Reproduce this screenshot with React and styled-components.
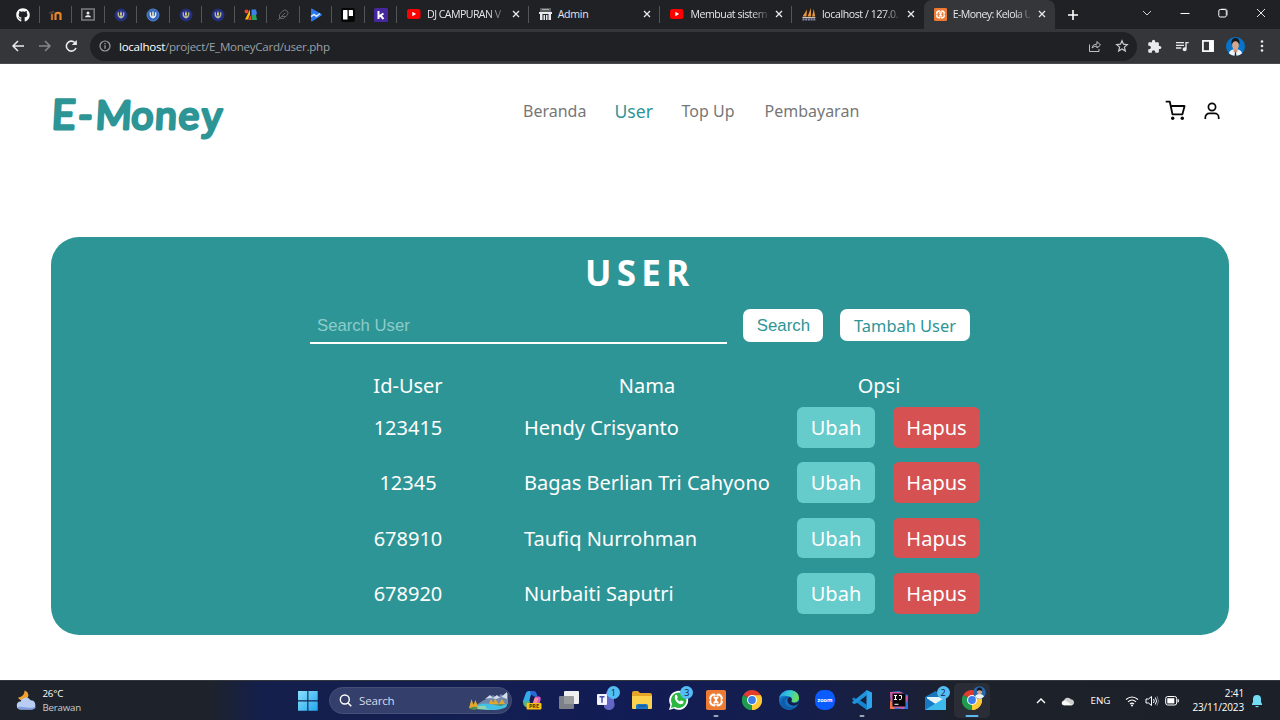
import React from "react";
import styled, { createGlobalStyle, css } from "styled-components";
import { FaGithub } from "react-icons/fa";
import { MdExtension, MdQueueMusic } from "react-icons/md";
import { Feather } from "lucide-react";

const teal = "#2e9596";
const uiFont = '"Open Sans", "Noto Sans", sans-serif';

const GlobalStyle = createGlobalStyle`
  * { box-sizing: border-box; }
  body { margin: 0; background: #fff; font-family: "Noto Sans", sans-serif; overflow: hidden; }
  svg { display: block; flex: none; }
  button, input { margin: 0; }
`;

const Screen = styled.div`
  width: 1280px;
  height: 720px;
  display: flex;
  flex-direction: column;
  overflow: hidden;
`;

/* ---------- browser ---------- */

const TabStrip = styled.div`
  height: 29px;
  flex: none;
  display: flex;
  padding-left: 7px;
  background: #202124;
  font: 10.6px ${uiFont};
  color: #e4e6e9;
`;

const separator = css`
  background-image: linear-gradient(#55565a, #55565a);
  background-size: 1px 17px;
  background-position: right 6px;
  background-repeat: no-repeat;
`;

const PinnedTab = styled.div`
  width: 32.5px;
  flex: none;
  display: flex;
  align-items: center;
  justify-content: center;
  ${separator}
`;

const Tab = styled.div`
  width: 131.7px;
  flex: none;
  display: flex;
  align-items: center;
  padding: 0 8px 1px 10px;
  ${(p) => (p.$active ? "background: #35363a; border-radius: 8px 8px 0 0;" : p.$last ? "" : separator)}
`;

const TabTitle = styled.span`
  width: 77px;
  margin-left: 6px;
  white-space: nowrap;
  letter-spacing: ${(p) => p.$spacing || "-0.15px"};
  ${(p) => p.$fade && "mask-image: linear-gradient(90deg, #000 80%, rgba(0, 0, 0, .2) 100%);"}
`;

const TabClose = styled.span`
  margin-left: auto;
`;

const NewTab = styled.div`
  width: 36px;
  display: flex;
  align-items: center;
  justify-content: center;
`;

const WindowButtons = styled.div`
  margin-left: auto;
  display: flex;
  align-items: center;
  height: 25px;
`;

const WindowButton = styled.div`
  width: 38px;
  display: flex;
  justify-content: center;
`;

const Toolbar = styled.div`
  height: 35px;
  flex: none;
  display: flex;
  align-items: center;
  background: #35363a;
  border-bottom: 1px solid #494a4e;
`;

const NavButtons = styled.div`
  display: flex;
  width: 90px;
  padding-left: 10px;
  gap: 10.5px;
`;

const AddressBar = styled.div`
  width: 1047px;
  height: 29px;
  border-radius: 15px;
  background: #202124;
  display: flex;
  align-items: center;
  padding: 0 8px 0 9px;
  font: 11.6px ${uiFont};
  letter-spacing: -0.28px;
  color: #9aa0a6;
`;

const Address = styled.span`
  margin-left: 8px;
  b { font-weight: 400; color: #fff; }
`;

const AddressActions = styled.span`
  margin-left: auto;
  display: flex;
  gap: 13px;
`;

const Extensions = styled.div`
  display: flex;
  align-items: center;
  padding-left: 10px;
  color: #e8eaed;
  gap: 12px;
  > svg:last-child { margin-left: 2px; }
`;

/* ---------- page ---------- */

const Page = styled.main`
  height: 616px;
  flex: none;
  background: #fff;
`;

const Header = styled.header`
  height: 94px;
  display: flex;
  align-items: center;
  padding: 0 56px 0 50px;
`;

const Logo = styled.div`
  width: 473px;
`;

const Menu = styled.nav`
  display: flex;
`;

const MenuLink = styled.a`
  width: ${(p) => p.$width}px;
  font-size: ${(p) => (p.$active ? 17.6 : 16)}px;
  line-height: 24px;
  color: ${(p) => (p.$active ? teal : "#777")};
  white-space: nowrap;
`;

const HeaderIcons = styled.div`
  margin-left: auto;
  display: flex;
  gap: 12px;
`;

const Card = styled.section`
  margin: 79px 51px 0 51.4px;
  height: 398px;
  border-radius: 28px;
  background: ${teal};
  color: #fff;
  display: flex;
  flex-direction: column;
  align-items: center;
`;

const CardTitle = styled.h1`
  margin: 12px 0 0;
  padding-right: 1px;
  font-size: 35px;
  line-height: 48px;
  letter-spacing: 5.3px;
`;

const SearchRow = styled.form`
  margin: 12px 0 0 -0.4px;
  width: 660px;
  height: 35px;
  display: flex;
  align-items: flex-start;
`;

const SearchInput = styled.input`
  width: 417px;
  height: 35px;
  margin-right: 16.4px;
  padding: 1px 7px 0;
  border: 0;
  border-bottom: 2px solid #fff;
  background: transparent;
  color: #fff;
  font: 16.7px "Liberation Sans", Arial, sans-serif;
  outline: none;
  &::placeholder { color: #8cccca; opacity: 1; }
`;

const WhiteButton = styled.button`
  width: ${(p) => p.$width}px;
  height: ${(p) => p.$height}px;
  padding: ${(p) => p.$padTop || 0}px 0 0;
  border: 0;
  border-radius: 7px;
  background: #fff;
  color: ${teal};
  font: ${(p) => p.$font};
  margin-right: 16.6px;
  white-space: nowrap;
  &:last-child { margin-right: 0; }
`;

const Table = styled.div`
  width: 680px;
  margin: 27.4px 0 0 -0.4px;
  font-size: 20px;
`;

const Row = styled.div`
  display: grid;
  grid-template-columns: 216px 262px 202px;
  height: ${(p) => (p.$head ? 29 : 55.3)}px;
  line-height: ${(p) => (p.$head ? 29 : 41)}px;
`;

const Cell = styled.div`
  white-space: nowrap;
  text-align: ${(p) => (p.$left ? "left" : "center")};
  padding-left: ${(p) => (p.$left ? 8 : 0)}px;
`;

const Actions = styled.div`
  display: flex;
  padding-left: 19px;
  gap: 18px;
`;

const ActionButton = styled.button`
  width: ${(p) => (p.$danger ? 87 : 78)}px;
  height: 40.6px;
  padding: 0;
  border: 0;
  border-radius: 6px;
  background: ${(p) => (p.$danger ? "#d65252" : "#66cbcb")};
  color: #fff;
  font: 20px "Noto Sans", sans-serif;
`;

const TableBody = styled.div`
  padding-top: 6.8px;
`;

/* ---------- taskbar ---------- */

const Taskbar = styled.footer`
  height: 40px;
  flex: none;
  display: flex;
  align-items: center;
  border-top: 1px solid #34373d;
  background: linear-gradient(90deg, #1e232b 0, #1e232b 210px, #141f4b 260px, #141f50 420px, #121c55 620px, #141e4d 790px, #1b2036 925px, #1d2129 960px, #1c2129 100%);
  font-family: ${uiFont};
  color: #fff;
`;

const Weather = styled.div`
  width: 298px;
  padding-left: 16px;
  display: flex;
  align-items: center;
  gap: 5.5px;
  font-size: 9.7px;
  line-height: 13.5px;
  letter-spacing: -0.2px;
  svg { margin-bottom: 2px; }
  span { display: block; color: #c8cbd0; }
`;

const TaskSearch = styled.div`
  width: 183px;
  height: 27px;
  margin: 0 2px 0 11px;
  padding: 0 2px 0 9px;
  display: flex;
  align-items: center;
  gap: 7px;
  border: 1px solid #454f78;
  border-radius: 14px;
  background: #353f6b;
  color: #d6daea;
  font-size: 11.6px;
  letter-spacing: -0.2px;
  svg:last-child { margin-left: auto; }
`;

const Apps = styled.div`
  display: flex;
  height: 39px;
  align-items: center;
`;

const AppSlot = styled.div`
  position: relative;
  width: 36.65px;
  height: 35px;
  border-radius: 5px;
  display: flex;
  align-items: center;
  justify-content: center;
  padding-bottom: 1px;
  ${(p) => p.$active && "background: #2a2d35;"}
  &::after {
    content: "";
    display: ${(p) => (p.$running ? "block" : "none")};
    position: absolute;
    bottom: ${(p) => (p.$active ? 1 : 1.5)}px;
    left: 50%;
    width: ${(p) => (p.$active ? 13 : 5)}px;
    height: 2px;
    transform: translateX(-50%);
    border-radius: 1px;
    background: ${(p) => (p.$active ? "#5ab9f0" : "#9fa3b6")};
  }
`;

const Badge = styled.span`
  position: absolute;
  top: 3px;
  right: 4px;
  width: 13px;
  height: 13px;
  border-radius: 50%;
  background: #54bdf3;
  color: #12233d;
  font-size: 9px;
  line-height: 13px;
  text-align: center;
`;

const Tray = styled.div`
  margin-left: auto;
  display: flex;
  align-items: center;
  padding-right: 17px;
`;

const Language = styled.span`
  width: 20px;
  margin: 0 14.5px 0 16px;
  font-size: 9.8px;
`;

const StatusIcons = styled.span`
  display: flex;
  gap: 6px;
`;

const Clock = styled.div`
  width: 65px;
  margin-right: 7px;
  text-align: right;
  font-size: 10px;
  line-height: 13.5px;
  letter-spacing: -0.15px;
`;

/* ---------- drawings ---------- */

const Svg = ({ w = 20, h = w, vb = `0 0 ${w} ${h}`, children, ...rest }) => (
  <svg width={w} height={h} viewBox={vb} fill="none" {...rest}>{children}</svg>
);

const Wordmark = () => (
  <Svg w={180} h={60} fontSize="39" fontFamily="Lato, sans-serif">
    <text
      x="3.500 30 47.500 83.200 107 130.600 154" y="48.500" transform="skewX(-3)"
      fill={teal} stroke={teal} strokeWidth="3" strokeLinejoin="round"
    ><tspan fontSize="41">E</tspan>-Mone<tspan fontFamily="Liberation Sans, sans-serif" fontSize="39" dy="1">y</tspan></text>
  </Svg>
);

const Xampp = ({ size }) => (
  <Svg w={size} vb="0 0 20 20">
    <rect width="20" height="20" rx="1.800" fill="#ed7a33" />
    <rect x="4.200" y="4.700" width="11.600" height="10.600" rx="4" stroke="#fff" strokeWidth="2.200" />
    <path d="M7.500 7.300q2.500 0 2.500 2.700t2.500 2.700M12.500 7.300q-2.500 0-2.500 2.700t-2.500 2.700" stroke="#fff" strokeWidth="2.100" />
    <path d="M8.500 3h3l-1.500 2.500zM8.500 17h3L10 14.500zM2.500 8.500v3L4.600 10zM17.500 8.500v3L15.400 10z" fill="#ed7a33" />
  </Svg>
);

const YouTube = () => (
  <Svg w={14} h={14}><rect y="2" width="13.5" height="10" rx="2.5" fill="#f00" /><path d="M5.3 4.8v4.4L9.2 7z" fill="#fff" /></Svg>
);

const Close = () => (
  <Svg w={10}><path d="M2 2l6 6M8 2L2 8" stroke="#e8eaed" strokeWidth="1.3" /></Svg>
);

const Moodle = () => (
  <Svg w={15} h={12}><path d="M4 5v6" stroke="#c47429" strokeWidth="2.200" /><path d="M7.500 11V5.500c0-2.300 5-2.300 5 0V11" stroke="#e9862b" strokeWidth="2.200" /><path d="M0 4l5-2.500L7 3 4 5z" fill="#4a4038" /></Svg>
);

const Classroom = () => (
  <Svg w={14} h={13}><rect x=".8" y="1" width="12.4" height="11" fill="#252629" stroke="#76787b" strokeWidth="1.6" /><circle cx="7" cy="5" r="1.5" fill="#e8e8e8" /><path d="M4 9.2c.4-2.6 5.6-2.6 6 0z" fill="#e8e8e8" /></Svg>
);

const Crest = ({ light }) => (
  <Svg w={14}><circle cx="7" cy="7" r="6" fill={light ? "#3765b9" : "#25308b"} stroke={light ? "#4f86d9" : "#26306e"} /><path d="M4.300 4.300c-.4 4 .8 5 2.700 5.300 1.900-.3 3.100-1.300 2.700-5.300M7 3.500v7" stroke={light ? "#e5edf7" : "#b9bd90"} strokeWidth="1.300" /><circle cx="7" cy="6" r="1" fill="#f0d95a" /></Svg>
);

const ColourMark = () => (
  <Svg w={14}><circle cx="2.500" cy="3.500" r="2" fill="#e94435" /><path d="M1 11.500l5-10v5l-2 5z" fill="#f9bb05" /><path d="M7.500 1.500H12l1 4.500-1.500 1h-4z" fill="#3c80ee" /><path d="M7.500 7H12l1 5H7.500z" fill="#27a559" /><path d="M4 12l3-5v5z" fill="#e94435" /></Svg>
);

const PlayWave = () => (
  <Svg w={14} h={14}><path d="M2 1.2q0-1 1.2-.5l9.2 5.2q1.2.8 0 1.7l-9 5.6Q2 13.800 2 12.400z" fill="#2a78f0" /><path d="M2 8.700l3-2.300 2.500 1.900L11 5.500" stroke="#d8eaff" strokeWidth="1.500" /></Svg>
);

const Trello = () => (
  <Svg w={14}><rect width="14" height="14" rx="2" fill="#060606" /><rect x="2" y="2" width="4.500" height="9.500" rx=".6" fill="#fff" /><rect x="7.800" y="2" width="4.200" height="6" rx=".6" fill="#fff" /></Svg>
);

const KMark = () => (
  <Svg w={14}><rect width="14" height="14" rx="1.500" fill="#46279d" /><path d="M4.500 3v8M9.500 5.500L5 8.300M6.500 7.500l3 3.500" stroke="#fff" strokeWidth="2" /></Svg>
);

const AdminMark = () => (
  <Svg w={13} h={14}><path d="M1 1h11v4H1z" fill="#5a5d60" /><path d="M3 2.500h7" stroke="#aaa" /><path d="M0 5h13v2H0zM1 7h2.500v6H1zM4.500 8h1.500v5H4.500zM7 8h1.500v5H7zM9.500 7H12v6H9.500z" fill="#e6e8e9" /></Svg>
);

const PhpMyAdmin = () => (
  <Svg w={14} h={14}><path d="M.5 9.500L5 2.500 4.500 9.500zM5.500 9.500L9 1v8.500zM10 9.500l1.800-7.500 1.400 7.500z" fill="#e8963b" /><path d="M0 10h14l-1.500 1.200H1z" fill="#c9c3b8" /><path d="M.5 12.500h13" stroke="#8588a8" strokeWidth="2" strokeDasharray="2 .7" /></Svg>
);

const Face = ({ size = 19 }) => (
  <Svg w={size} vb="0 0 20 20"><circle cx="10" cy="10" r="10" fill="#0873ca" /><path d="M3 17q1.500-3.500 5-4l2 1 2-1q3.500.5 5 4-3 3-7 3t-7-3z" fill="#eef3f7" /><path d="M8 11h4v4l-2 2-2-2z" fill="#c78f76" /><ellipse cx="10" cy="8.500" rx="3.500" ry="4.800" fill="#d6a58b" /><path d="M6 8C5 3.500 7 1 10 1s5 2.500 4 7c-.8-1.500-1.500-3.500-4-3.500S6.800 6.500 6 8z" fill="#17191e" /><path d="M9.500 16h1l.5 4h-2z" fill="#20242b" /></Svg>
);

const Chrome = ({ face }) => (
  <Svg w={20} overflow="visible">
    <path d="M10 10L1.340 5A10 10 0 0 1 18.660 5z" fill="#e33b2e" />
    <path d="M10 10l8.660-5A10 10 0 0 1 10 20z" fill="#fcc934" />
    <path d="M10 10v10A10 10 0 0 1 1.340 5z" fill="#1e9b4c" />
    <path d="M10 5.300h8.800A10 10 0 0 1 10 20l4.500-7.500z" fill="#fcc934" />
    <path d="M1.340 5L6 12.500 10 14.500 8 20A10 10 0 0 1 1.340 5z" fill="#1e9b4c" />
    <circle cx="10" cy="10" r="5" fill="#fff" /><circle cx="10" cy="10" r="3.900" fill="#3e7de8" />
    {face && <g transform="translate(11.500 -3.500)"><circle cx="6" cy="6" r="6.300" fill="#2568ae" /><path d="M1.500 10q1-2.500 4.500-2.500t4.500 2.500q-4.500 4.500-9 0z" fill="#f1f3f5" /><circle cx="6" cy="5" r="2.600" fill="#d6a58b" /><path d="M3.200 5q0-4 2.800-4t2.800 4Q6 2.500 3.200 5z" fill="#15171c" /></g>}
  </Svg>
);

const WeatherIcon = () => (
  <Svg w={21} h={22}><path d="M8.500 1.500c0 4-2 6.500-6.500 7 1.500 3 5.500 4 8.500 1.500s2.500-7-2-8.500z" fill="#efa22e" /><path d="M5 20.500a4 4 0 0 1-.4-8 5.500 5.500 0 0 1 10-1.200A4.700 4.700 0 0 1 16 20.500z" fill="#b9cdf4" /><path d="M1.500 18q1 2.500 3.500 2.500h11q3 0 4-3-4 2-9 1t-9.500-.5z" fill="#809fe0" /></Svg>
);

const Windows = () => (
  <Svg w={20}><defs><linearGradient id="win" x1="0" y1="0" x2="1" y2="1"><stop stopColor="#8be0fd" /><stop offset="1" stopColor="#22a5ee" /></linearGradient></defs><path d="M0 0h9.300v9.300H0zM10.400 0h9.300v9.300h-9.300zM0 10.400h9.300v9.300H0zM10.400 10.400h9.300v9.300h-9.300z" fill="url(#win)" /></Svg>
);

const Landscape = () => (
  <Svg w={41} h={20}><path d="M8 14l8-5 5-2 4-3 4 3 4-4 3 2 4-3v11l-10 3z" fill="#6f86ad" /><path d="M17 8l5-4 3 3 4-3 3 3 7-6v7l-5-2-6 2-5-1z" fill="#d5deed" /><path d="M4 17q8-6 18-4t17 0q1 4-8 5.500t-27-1.500z" fill="#42bfe2" /><path d="M5 18q5-4 13-3-2 2 4 3.500z" fill="#8fd5b0" /><path d="M1 17L3.500 8l3 9zM4 17L7.500 9l3 8zM21 13l2-5 3 5zM25 13.500l2-6 4 6zM31 13l3-5 3 5z" fill="#e1a72e" /><path d="M1 18q5-4 9-1l-3 2zM25 13.500h12l-4 1.500z" fill="#4d8f51" /></Svg>
);

const Copilot = () => (
  <Svg w={20}><path d="M1 11L3.500 4Q4.500 1 7 1h5q-2.500 1-3.500 5L7 12H3q-3 0-2-1z" fill="#36a9e9" /><path d="M8 1h4q2 0 2.800 3l.7 2.500h-3.500L8.500 4z" fill="#2d68d9" /><path d="M13 6.500h3.500q3 0 2 3.500l-1.500 5q-1 2-3 2H9q2-1 3-5z" fill="#d65bc2" /><path d="M1 11h7l-1 4q0 2-2 2-4 0-4-6z" fill="#50b58a" /><path d="M12.500 8h4L14.500 14h-4z" fill="#f58b9d" /><rect x="4.500" y="13" width="15" height="6.500" rx="1" fill="#f8bf15" /><text x="12" y="18.200" fill="#463300" fontSize="5.500" fontWeight="700" textAnchor="middle" fontFamily="Open Sans">PRE</text></Svg>
);

const TaskView = () => (
  <Svg w={20}><rect x="5" y="1" width="15" height="13" rx="1" fill="#f0f0f0" /><rect x="0" y="6" width="15" height="13" rx="1" fill="#8d8e91" fillOpacity=".88" /></Svg>
);

const Teams = () => (
  <Svg w={20}><path d="M8 7h10v5a5 5 0 0 1-10 5z" fill="#6166c4" /><circle cx="13" cy="4" r="3" fill="#7e86df" /><rect x="1" y="4" width="10" height="11" rx="1" fill="#f3f4ff" /><path d="M3.500 6.800h5M6 6.800v6" stroke="#444eaa" strokeWidth="1.500" /></Svg>
);

const Explorer = () => (
  <Svg w={20}><path d="M0 3q0-2 2-2h4l2 2h10q2 0 2 2v4H0z" fill="#e5a526" /><path d="M0 6h20v12q0 1-1 1H1q-1 0-1-1z" fill="#fbd24e" /><path d="M4 19v-3q0-2 2-2h8q2 0 2 2v3z" fill="#1977c7" /><path d="M6 16h8" stroke="#14558f" /></Svg>
);

const WhatsApp = () => (
  <Svg w={20}><path d="M0 20l1.400-5A9.500 9.500 0 1 1 5 18.600z" fill="#fff" /><path d="M2 18l1-4A7.700 7.700 0 1 1 6 17z" fill="#2bb741" /><path d="M6.200 5l1.500-.2 1.100 2.600-.9 1.300q1 2 3 2.900l1.200-1.300 2.600 1.200q0 2.500-2.600 2.800C8 13.800 4.500 9 6.200 5z" fill="#fff" /></Svg>
);

const Edge = () => (
  <Svg w={20}><defs><linearGradient id="edge" x1="0" y1="0" x2="1" y2=".3"><stop stopColor="#238eda" /><stop offset=".5" stopColor="#31c7dc" /><stop offset="1" stopColor="#6bdc62" /></linearGradient></defs><circle cx="10" cy="10" r="10" fill="#1376ca" /><path d="M0 9C1-2 20-3 20 8c0 4-5 5.500-7.500 3.500 1-1.500 1-4-2-5C5 5 1 6 0 9z" fill="url(#edge)" /><path d="M7 9c-3 6 4 10 11 7C14 21 5 21 2 15 0 10 5 6 10 7z" fill="#125da9" /><path d="M10.500 7C7 9 8 14 13 15.500q3 .7 6-1.500l1.500-4q-1.500 3-4.500 3c-3 0-4.500-1-3.500-2.500.6-1 0-3-2-3.500z" fill="#171e48" /></Svg>
);

const Zoom = () => (
  <Svg w={20}><rect width="20" height="20" rx="8.500" fill="#0b5cff" /><text x="10" y="11.700" textAnchor="middle" fill="#fff" fontSize="5.600" fontWeight="700" fontFamily="Open Sans">zoom</text></Svg>
);

const Code = () => (
  <Svg w={20}><path d="M14.500 0L20 2.500v15L14.500 20z" fill="#2ca5ec" /><path d="M15 0L5 9.800 2 7.500.3 8.500v1L15 20v-5L7 9.500 15 5z" fill="#1684cf" /><path d="M2 14L.3 13v-1.200L15 0v5L4 13.500z" fill="#1f93db" /></Svg>
);

const IntelliJ = () => (
  <Svg w={18}><path d="M0 1l9-1 9 4v14H2z" fill="#2874df" /><path d="M0 1h11l7 5-4 12-13-2z" fill="#ce5a9b" /><path d="M0 9l5 9H0z" fill="#ef7546" /><rect x="2.500" y="2.500" width="13" height="13" fill="#08070c" /><path d="M4 4.500h3M5.500 4.500v4M4 8.500h3M9 4.500h2.500v3q0 1.400-2.500 1.200M4.500 13.300h4" stroke="#fff" strokeWidth="1" /></Svg>
);

const Mail = () => (
  <Svg w={21} h={20}><path d="M0 7l10.500-6L21 7v13H0z" fill="#1976bb" /><path d="M2 7h17v8H2z" fill="#e8f5fb" /><path d="M0 7l10.500 7L0 20z" fill="#1679c3" /><path d="M21 7L0 20h21z" fill="#3eb9ed" /></Svg>
);

const Wifi = () => (
  <Svg w={14} h={12}><path d="M1 4.500q6-5 12 0M3 6.800q4-3.500 8 0M5 9q2-1.800 4 0" stroke="#fff" strokeWidth="1.100" /><circle cx="7" cy="10.500" r="1" fill="#fff" /></Svg>
);

const Volume = () => (
  <Svg w={14} h={12}><path d="M1 4h2.500L6.500 1.500v9L3.500 8H1z" stroke="#fff" /><path d="M8.500 4q1.500 2 0 4M10.300 2.500q2.500 3.500 0 7" stroke="#fff" /><path d="M12 1.200q3 4.800 0 9.600" stroke="#777b83" /></Svg>
);

const Battery = () => (
  <Svg w={14} h={12}><rect x=".7" y="1.500" width="11" height="8.500" rx="2" stroke="#fff" /><rect x="2.300" y="3.200" width="7" height="5.200" fill="#fff" /><path d="M13.200 4.200v3" stroke="#fff" strokeWidth="1.300" /></Svg>
);

/* ---------- data ---------- */

const pinned = [
  <FaGithub size={14} color="#fff" />, <Moodle />, <Classroom />, <Crest />, <Crest light />, <Crest />,
  <Crest />, <ColourMark />, <Feather size={12} color="#626569" strokeWidth={2} />, <PlayWave />, <Trello />, <KMark />,
];

const tabs = [
  { icon: <YouTube />, title: "DJ CAMPURAN V", fade: true, spacing: "-0.55px" },
  { icon: <AdminMark />, title: "Admin", spacing: "-0.3px" },
  { icon: <YouTube />, title: "Membuat sistem", fade: true, spacing: "-0.45px" },
  { icon: <PhpMyAdmin />, title: "localhost / 127.0.", fade: true, last: true, spacing: "-0.42px" },
  { icon: <Xampp size={13} />, title: "E-Money: Kelola U", fade: true, active: true, spacing: "-0.6px" },
];

const links = [
  { label: "Beranda", width: 91.5 },
  { label: "User", width: 67, active: true },
  { label: "Top Up", width: 83 },
  { label: "Pembayaran", width: 100 },
];

const users = [
  ["123415", "Hendy Crisyanto"],
  ["12345", "Bagas Berlian Tri Cahyono"],
  ["678910", "Taufiq Nurrohman"],
  ["678920", "Nurbaiti Saputri"],
];

const apps = [
  { icon: <Copilot /> }, { icon: <TaskView /> }, { icon: <Teams />, badge: 1 }, { icon: <Explorer /> },
  { icon: <WhatsApp />, badge: 3 },
  { icon: <Xampp size={20} />, running: true },
  { icon: <Chrome /> }, { icon: <Edge /> }, { icon: <Zoom /> }, { icon: <Code />, running: true },
  { icon: <IntelliJ /> }, { icon: <Mail />, badge: 2 },
  { icon: <Chrome face />, running: true, active: true },
];

function Browser() {
  return (
    <>
      <TabStrip>
        {pinned.map((icon, i) => <PinnedTab key={i}>{icon}</PinnedTab>)}
        {tabs.map((t) => (
          <Tab key={t.title} $active={t.active} $last={t.last}>
            {t.icon}
            <TabTitle $fade={t.fade} $spacing={t.spacing}>{t.title}</TabTitle>
            <TabClose><Close /></TabClose>
          </Tab>
        ))}
        <NewTab><Svg w={12}><path d="M6 1v10M1 6h10" stroke="#fff" strokeWidth="1.600" /></Svg></NewTab>
        <WindowButtons>
          <WindowButton><Svg w={12}><path d="M2 4l4 4 4-4" stroke="#d0d1d3" /></Svg></WindowButton>
          <WindowButton><Svg w={12}><path d="M1.500 6.500h9" stroke="#fff" /></Svg></WindowButton>
          <WindowButton><Svg w={12}><path d="M4 2h4.500q2 0 2 2v4.500" stroke="#888" /><rect x="1.800" y="2.500" width="7.500" height="7.500" rx="1.500" stroke="#fff" /></Svg></WindowButton>
          <WindowButton><Svg w={12}><path d="M2 2l8 8M10 2l-8 8" stroke="#e4e4e4" /></Svg></WindowButton>
        </WindowButtons>
      </TabStrip>
      <Toolbar>
        <NavButtons>
          <Svg w={16}><path d="M14 8H3.500M8 3L3 8l5 5" stroke="#e8eaed" strokeWidth="1.500" /></Svg>
          <Svg w={16}><path d="M2 8h10.500M8 3l5 5-5 5" stroke="#85878b" strokeWidth="1.500" /></Svg>
          <Svg w={16}><path d="M13 10a5 5 0 1 1-1.200-5.500L13.500 6" stroke="#e8eaed" strokeWidth="1.600" /><path d="M13.800 2v5h-5z" fill="#e8eaed" /></Svg>
        </NavButtons>
        <AddressBar>
          <Svg w={12}><circle cx="6" cy="6" r="5" stroke="#9aa0a6" strokeWidth="1.200" /><path d="M6 5.300v3.500M6 3v1.300" stroke="#9aa0a6" strokeWidth="1.300" /></Svg>
          <Address><b>localhost</b>/project/E_MoneyCard/user.php</Address>
          <AddressActions>
            <Svg w={14}><path d="M1.500 5.500v7h9.500V10M4 9q.5-4 5-4V2.500L12.500 6 9 9V7Q6 7 4 9z" stroke="#bdc1c6" strokeLinejoin="round" /></Svg>
            <Svg w={14}><path d="M7 1.700l1.500 3.500 3.800.4-2.900 2.500.9 3.800L7 9.900l-3.300 2 .9-3.800-2.900-2.500 3.800-.4z" stroke="#c9ccd1" strokeWidth="1.200" /></Svg>
          </AddressActions>
        </AddressBar>
        <Extensions>
          <MdExtension size={15} />
          <MdQueueMusic size={16} />
          <Svg w={12}><rect x=".9" y=".9" width="10.200" height="10.200" stroke="#fff" strokeWidth="1.700" /><path d="M7 1h4v10H7z" fill="#fff" /></Svg>
          <Face />
          <Svg w={6} h={14}><g fill="#e8eaed"><circle cx="3" cy="2.500" r="1.300" /><circle cx="3" cy="7" r="1.300" /><circle cx="3" cy="11.500" r="1.300" /></g></Svg>
        </Extensions>
      </Toolbar>
    </>
  );
}

function UserPage() {
  return (
    <Page>
      <Header>
        <Logo><Wordmark /></Logo>
        <Menu>
          {links.map((l) => <MenuLink key={l.label} $width={l.width} $active={l.active}>{l.label}</MenuLink>)}
        </Menu>
        <HeaderIcons>
          <Svg w={24}><path d="M1.700 2.700H5.800l2.700 12.600h9.900L20.600 7H6.800" stroke="#080808" strokeWidth="1.800" strokeLinejoin="round" /><circle cx="8.700" cy="19.300" r="1.700" fill="#080808" /><circle cx="18.300" cy="19.300" r="1.700" fill="#080808" /></Svg>
          <Svg w={24}><circle cx="12" cy="8" r="3.600" stroke="#080808" strokeWidth="1.700" /><path d="M5.300 20v-1.600a4 4 0 0 1 4-4h5.400a4 4 0 0 1 4 4V20" stroke="#080808" strokeWidth="1.700" /></Svg>
        </HeaderIcons>
      </Header>
      <Card>
        <CardTitle>USER</CardTitle>
        <SearchRow onSubmit={(e) => e.preventDefault()}>
          <SearchInput placeholder="Search User" />
          <WhiteButton $width={80} $height={33} $padTop={1} $font='16.8px "Liberation Sans", sans-serif'>Search</WhiteButton>
          <WhiteButton type="button" $width={130} $height={32} $font='16.4px "Noto Sans", sans-serif'>Tambah User</WhiteButton>
        </SearchRow>
        <Table>
          <Row $head><Cell>Id-User</Cell><Cell>Nama</Cell><Cell>Opsi</Cell></Row>
          <TableBody>
            {users.map(([id, name]) => (
              <Row key={id}>
                <Cell>{id}</Cell>
                <Cell $left>{name}</Cell>
                <Actions><ActionButton>Ubah</ActionButton><ActionButton $danger>Hapus</ActionButton></Actions>
              </Row>
            ))}
          </TableBody>
        </Table>
      </Card>
    </Page>
  );
}

function WindowsTaskbar() {
  return (
    <Taskbar>
      <Weather><WeatherIcon /><div>26°C<span>Berawan</span></div></Weather>
      <Windows />
      <TaskSearch>
        <Svg w={13}><circle cx="5.800" cy="5.500" r="4.500" stroke="#fff" strokeWidth="1.400" /><path d="M9 9l3.300 3.300" stroke="#fff" strokeWidth="1.500" /></Svg>
        Search
        <Landscape />
      </TaskSearch>
      <Apps>
        {apps.map((a, i) => (
          <AppSlot key={i} $running={a.running} $active={a.active}>{a.icon}{a.badge && <Badge>{a.badge}</Badge>}</AppSlot>
        ))}
      </Apps>
      <Tray>
        <Svg w={12}><path d="M2 8l4-4 4 4" stroke="#fff" strokeWidth="1.400" /></Svg>
        <Svg w={14} h={10} style={{ marginLeft: 14 }}><path d="M3 9.500a2.700 2.700 0 0 1 0-5.200 4 4 0 0 1 7-1 3.200 3.200 0 0 1 1 6.200z" fill="#cfcfcf" /><path d="M1 6q3-3 6 0l4 3H3Q0 9 1 6z" fill="#f7f7f7" /></Svg>
        <Language>ENG</Language>
        <StatusIcons><Wifi /><Volume /><Battery /></StatusIcons>
        <Clock>2:41<br />23/11/2023</Clock>
        <Svg w={12} h={14}><path d="M1 10l1-2V5a4 4 0 0 1 8 0v3l1 2v1H1zM4 12h4q-2 2.500-4 0z" fill="#75dcf6" /></Svg>
      </Tray>
    </Taskbar>
  );
}

export default function App() {
  return (
    <Screen>
      <GlobalStyle />
      <Browser />
      <UserPage />
      <WindowsTaskbar />
    </Screen>
  );
}
